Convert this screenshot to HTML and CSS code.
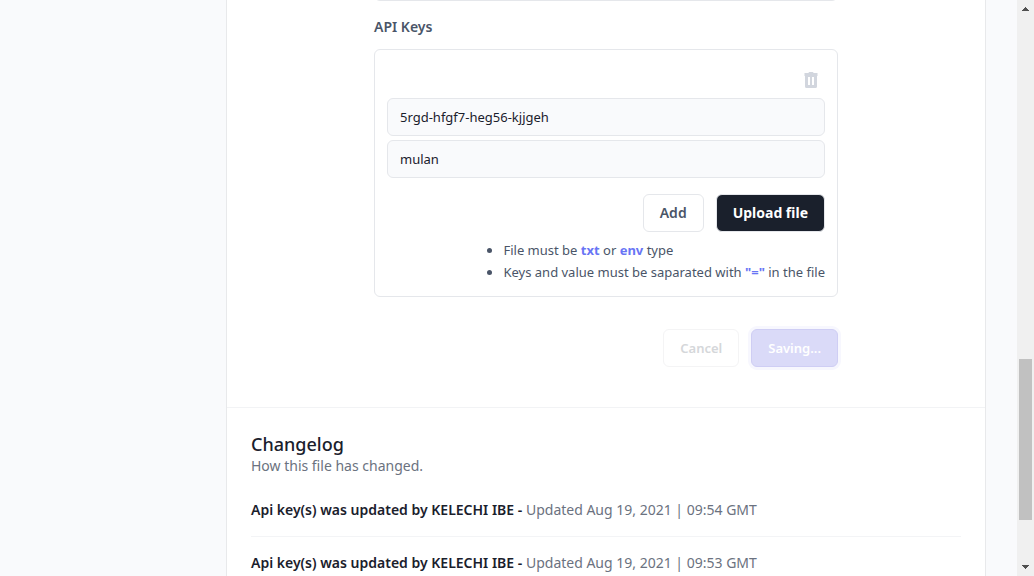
FILE: index.html
```html
<!DOCTYPE html>
<html lang="en">
<head>
<meta charset="utf-8">
<title>API Keys</title>
<link rel="stylesheet" href="styles.css">
</head>
<body>
<div class="page">
  <main class="panel">
    <form class="settings">
      <input class="field field-previous" type="text" aria-label="Name">
      <h2 class="section-label">API Keys</h2>
      <section class="card">
        <div class="card-tools">
          <button class="icon-button" type="button" aria-label="Delete key">
            <svg width="14" height="16" viewBox="0 0 14 16" fill="currentColor" fill-rule="evenodd" aria-hidden="true"><path d="M4.500 1Q4.500 0 5.500 0h3q1 0 1 1H13.500v3H.5V1zM1 4h12v10.500q0 1.500-1.500 1.500h-9Q1 16 1 14.500zM4 5v8h2V5zM8 5v8h2V5z"/></svg>
          </button>
        </div>
        <div class="pair">
          <input class="field" type="text" aria-label="Key" value="5rgd-hfgf7-heg56-kjjgeh">
          <input class="field" type="text" aria-label="Value" value="mulan">
        </div>
        <div class="actions">
          <button class="button" type="button">Add</button>
          <button class="button button-dark" type="button">Upload file</button>
        </div>
        <ul class="hints">
          <li>File must be <b>txt</b> or <b>env</b> type</li>
          <li>Keys and value must be saparated with <b>"="</b> in the file</li>
        </ul>
      </section>
      <div class="form-actions">
        <button class="button button-muted" type="button" disabled>Cancel</button>
        <button class="button button-saving" type="submit" disabled>Saving...</button>
      </div>
    </form>
    <section class="changelog">
      <h2 class="changelog-title">Changelog</h2>
      <p class="changelog-intro">How this file has changed.</p>
      <ul class="entries">
        <li class="entry"><strong>Api key(s) was updated by KELECHI IBE -</strong> Updated Aug 19, 2021 | 09:54 GMT</li>
        <li class="entry"><strong>Api key(s) was updated by KELECHI IBE -</strong> Updated Aug 19, 2021 | 09:53 GMT</li>
      </ul>
    </section>
  </main>
</div>
<div class="scrollbar" aria-hidden="true">
  <svg class="arrow" width="7" height="4" viewBox="0 0 7 4"><path d="M3 0h1v1h1v1h1v1h1v1H0V3h1V2h1V1h1z"/></svg>
  <div class="track"><div class="thumb"></div></div>
  <svg class="arrow" width="7" height="4" viewBox="0 0 7 4"><path d="M0 0h7v1H6v1H5v1H4v1H3V3H2V2H1V1H0z"/></svg>
</div>
</body>
</html>
```
FILE: styles.css
```css
* { box-sizing: border-box; }
body {
  margin: 0;
  height: 100vh;
  overflow: hidden;
  display: flex;
  background: #f9fafc;
  color: #1a202c;
  font: 14px/20px "Noto Sans", "Open Sans", sans-serif;
}
h2, p, ul { margin: 0; }
button, input { font: inherit; }
.page {
  flex: 1;
  min-width: 0;
  padding: 0 31px 0 226px;
  overflow: hidden;
}
.panel {
  min-height: 100%;
  background: #fff;
  border: solid #e8e9eb;
  border-width: 0 1px;
}
.settings {
  max-width: 464px;
  margin: 0 auto;
  padding-bottom: 40px;
}
.field {
  display: block;
  width: 100%;
  height: 38px;
  padding: 0 12px;
  border: 1px solid #e5e7eb;
  border-radius: 6px;
  background: #f9fafc;
  color: #1a202c;
  font-size: 13px;
}
.field-previous { margin-top: -37px; }
.section-label {
  padding: 16px 0 12px;
  color: #4a5568;
  font-size: 14px;
  font-weight: 600;
}
.card {
  padding: 20px 12px 13px;
  border: 1px solid #e5e7eb;
  border-radius: 6px;
}
.card-tools {
  display: flex;
  justify-content: flex-end;
  padding: 2px 7px 10px;
}
.icon-button {
  display: flex;
  padding: 0;
  border: 0;
  background: none;
  color: #d2d6de;
}
.pair { display: grid; gap: 4px; }
.actions, .form-actions {
  display: flex;
  justify-content: flex-end;
  gap: 12px;
  margin-top: 16px;
}
.button {
  height: 38px;
  padding: 0 16px;
  border: 1px solid #e5e7eb;
  border-radius: 6px;
  background: #fff;
  color: #4a5568;
  font-size: 14px;
  font-weight: 600;
}
.button-dark { background: #1a202c; color: #fff; font-weight: 700; }
.hints {
  width: fit-content;
  margin: 7px 0 0 auto;
  padding: 0;
  color: #4a5568;
  font-size: 13px;
  line-height: 22px;
}
.hints b { color: #6875f5; }
.form-actions { margin-top: 32px; }
.button-muted, .button-saving { font-size: 13px; }
.button-muted { border-color: #f4f4f5; color: #d5d7da; }
.button-saving {
  border-color: #cfcef4;
  background: #dadaf8;
  color: #fff;
  box-shadow: 0 0 0 3px #f7f7fe;
}
.changelog {
  padding: 22px 24px 0;
  border-top: 1px solid #f2f3f5;
}
.changelog-title {
  font-size: 18px;
  line-height: 28px;
  font-weight: 500;
}
.changelog-intro { margin-top: -2px; color: #6b7280; }
.entries {
  margin-top: 8px;
  padding: 0;
  list-style: none;
}
.entry {
  padding: 16px 0;
  border-bottom: 1px solid #f3f4f6;
  color: #6b7280;
}
.entry strong { color: #1a202c; font-weight: 600; }
.scrollbar {
  width: 17px;
  display: flex;
  flex-direction: column;
  align-items: center;
  padding: 7px 2px;
  background: #f0f0f0;
}
.arrow { fill: #505050; }
.track {
  flex: 1;
  width: 13px;
  display: flex;
  flex-direction: column;
  justify-content: flex-end;
  padding-bottom: 45px;
}
.thumb { height: 31.6%; background: #c1c1c1; }
```
